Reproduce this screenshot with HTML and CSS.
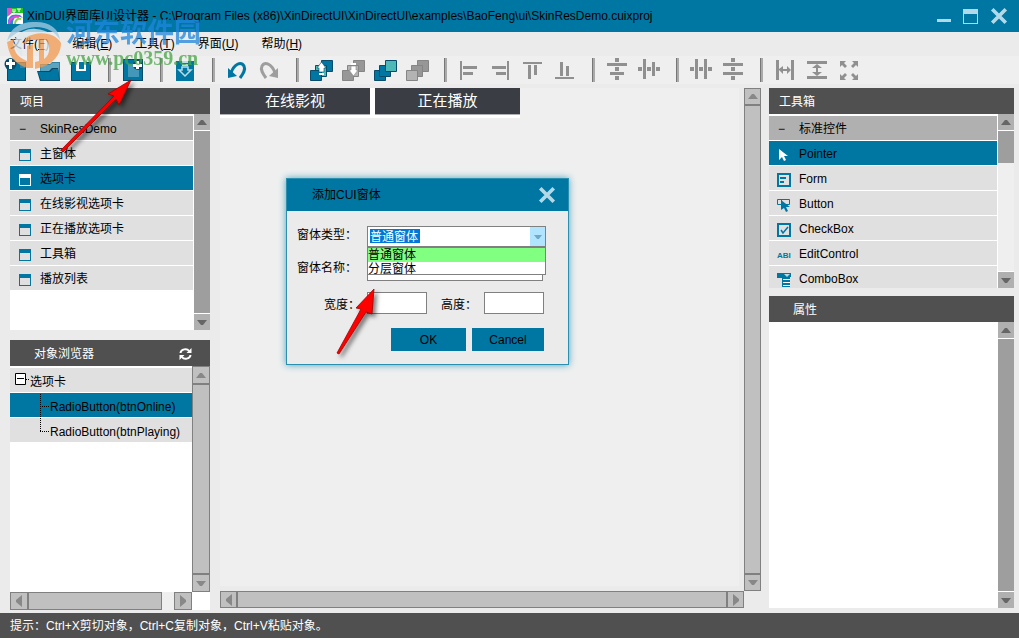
FILE: index.html
```html
<!DOCTYPE html>
<html lang="zh-CN">
<head>
<meta charset="utf-8">
<title>XinDUI界面库UI设计器</title>
<link rel="stylesheet" href="styles.css">
</head>
<body>
<svg class="defs" aria-hidden="true">
  <symbol id="up" viewBox="0 0 10 5"><path d="M0 5 4 0H6L10 5Z" fill="currentColor"/></symbol>
  <symbol id="down" viewBox="0 0 10 5"><path d="M0 0H10L6 5H4Z" fill="currentColor"/></symbol>
  <symbol id="left" viewBox="0 0 6 12"><path d="M6 0V12L0 7V5Z" fill="currentColor"/></symbol>
  <symbol id="right" viewBox="0 0 6 12"><path d="M0 0V12L6 7V5Z" fill="currentColor"/></symbol>
  <symbol id="win" viewBox="0 0 12 12"><path d="M0 0H12V12H0ZM1 4V11H11V4Z" fill="currentColor" fill-rule="evenodd"/></symbol>
  <symbol id="close" viewBox="0 0 16 16"><path d="M2 2 14 14M14 2 2 14" stroke="#b3d9e8" stroke-width="3.2"/></symbol>
</svg>

<header class="titlebar">
  <svg class="app-icon" width="16" height="16" viewBox="0 0 16 16"><path d="M0 0H16V16H0Z" fill="#fff"/><path d="M0 0H5V5L0 9Z" fill="#e04fc4"/><path d="M5 0H16V5H5Z" fill="#22c322"/><path d="M6 1V4H8V1M10 1H14M12 1V4" stroke="#fff" fill="none"/><path d="M1 16C0 8 6 5 13 7L16 10C9 7 6 10 6 16Z" fill="#3c7de0"/><path d="M2 16C2 10 7 8 12 9" stroke="#e84bd0" stroke-width="2" fill="none"/><path d="M8 16C8 12 11 10 14 11" stroke="#8ad044" stroke-width="2" fill="none"/></svg>
  <h1 class="app-title">XinDUI界面库UI设计器 - C:\Program Files (x86)\XinDirectUI\XinDirectUI\examples\BaoFeng\ui\SkinResDemo.cuixproj</h1>
  <button class="plain" aria-label="最小化"><svg width="14" height="16" viewBox="0 0 14 16"><path d="M0 11H14V14H0Z" fill="#b3d9e8"/></svg></button>
  <button class="plain" aria-label="最大化"><svg width="15" height="16" viewBox="0 0 15 16"><path d="M0 1H15V16H0ZM1 6V15H14V6Z" fill="#b3d9e8" fill-rule="evenodd"/></svg></button>
  <button class="plain" aria-label="关闭"><svg width="18" height="18"><use href="#close"/></svg></button>
</header>

<nav class="menubar">
  <button>文件(<u>F</u>)</button><button>编辑(<u>E</u>)</button><button>工具(<u>T</u>)</button><button>界面(<u>U</u>)</button><button>帮助(<u>H</u>)</button>
</nav>

<div class="toolbar" role="toolbar" aria-label="工具栏">
  <button aria-label="新建"><svg viewBox="0 0 32 28"><path d="M7 6H26V25H7Z" fill="#0a4b69"/><path d="M8 7H20L25 12V24H8Z" fill="#0077a3"/><path d="M20 7V12H25V7Z" fill="#2b86a9"/><circle cx="10.500" cy="8" r="6" fill="#0a4b69"/><path d="M9 3H12V6H15V9H12V13H9V9H6V6H9Z" fill="#fff"/></svg></button>
  <button aria-label="打开"><svg viewBox="0 0 32 28"><path d="M8 8H18L20 6H28V25H8Z" fill="#2f84a3"/><path d="M9 9H18L20 7H27V24H8Z" fill="#5fa4be"/><path d="M5 15H17L20 12H26L28 25H8Z" fill="#0a4b69"/><path d="M6 16H18L21 13H26L27 24H9Z" fill="#0077a3"/></svg></button>
  <button aria-label="保存"><svg viewBox="0 0 32 28"><path d="M7 6H27V25H7Z" fill="#0a4b69"/><path d="M8 7H26V24H8Z" fill="#0077a3"/><path d="M12 5H22V15H12Z" fill="#fff"/><path d="M15 6H20V13H15Z" fill="#0077a3"/></svg></button>
  <span class="sep"></span>
  <button aria-label="添加窗体"><svg viewBox="0 0 32 28"><path d="M7 3H27V25H7Z" fill="#0a4b69"/><path d="M8 4H26V24H8Z" fill="#0077a3"/><path d="M12 8H23V21H12Z" fill="#4397b8"/><circle cx="22" cy="9" r="5" fill="#0a4b69"/><path d="M20 5H23V8H26V11H23V13H20V11H17V8H20Z" fill="#fff"/></svg></button>
  <span class="sep"></span>
  <button aria-label="导入"><svg viewBox="0 0 32 28"><path d="M8 5H26V25H8Z" fill="#0077a3"/><path d="M14 6H20M14 9H20" stroke="#b7dce8" stroke-width="2"/><path d="M14 11H20V14H23L17 20 11 14H14Z" fill="none" stroke="#b7dce8" stroke-width="1.500"/></svg></button>
  <span class="sep"></span>
  <button aria-label="撤销"><svg viewBox="0 0 32 28"><path d="M11 17C14 8 21 5 24 10 26 14 23 18 20 22" fill="none" stroke="#0077a3" stroke-width="3"/><path d="M8 12 8 22 17 20Z" fill="#0077a3"/></svg></button>
  <button aria-label="重做"><svg viewBox="0 0 32 28"><path d="M23 17C20 8 13 5 10 10 8 14 11 18 14 22" fill="none" stroke="#9e9e9e" stroke-width="3"/><path d="M26 12 26 22 17 20Z" fill="#9e9e9e"/></svg></button>
  <span class="sep"></span>
  <button aria-label="上移一层"><svg viewBox="0 0 32 28"><g fill="#0077a3" stroke="#0a4b69"><path d="M17.500 4.500H28.500V15.500H17.500Z"/><path d="M11.500 9.500H22.500V20.500H11.500Z" fill="#4cb8b8"/><path d="M6.500 14.500H17.500V24.500H6.500Z"/></g><path d="M17.500 6 22 12H20V16H15V12H13Z" fill="#fff" stroke="#0a4b69" stroke-width=".6"/><path d="M15 18H20" stroke="#fff" stroke-width="2"/></svg></button>
  <button aria-label="下移一层"><svg viewBox="0 0 32 28"><g fill="#979797" stroke="#858585"><path d="M17.500 4.500H28.500V15.500H17.500Z"/><path d="M11.500 9.500H22.500V20.500H11.500Z" fill="#b3b3b3"/><path d="M6.500 14.500H17.500V24.500H6.500Z"/></g><path d="M17.500 20 22 14H20V10H15V14H13Z" fill="#fff" stroke="#888" stroke-width=".6"/><path d="M15 8H20" stroke="#fff" stroke-width="2"/></svg></button>
  <button aria-label="置于顶层"><svg viewBox="0 0 32 28"><g fill="#0077a3" stroke="#0a4b69"><path d="M6.500 14.500H17.500V24.500H6.500Z"/><path d="M11.500 9.500H22.500V20.500H11.500Z"/><path d="M17.500 4.500H28.500V15.500H17.500Z" fill="#4cb8b8"/></g></svg></button>
  <button aria-label="置于底层"><svg viewBox="0 0 32 28"><g fill="#979797" stroke="#858585"><path d="M17.500 4.500H28.500V15.500H17.500Z"/><path d="M11.500 9.500H22.500V20.500H11.500Z"/><path d="M6.500 14.500H17.500V24.500H6.500Z" fill="#b3b3b3"/></g></svg></button>
  <span class="sep"></span>
  <button aria-label="左对齐"><svg viewBox="0 0 32 28"><path d="M8 5H10V24H8ZM11 10H25V13H11ZM11 16H21V19H11Z"/></svg></button>
  <button aria-label="右对齐"><svg viewBox="0 0 32 28"><path d="M23 5H25V24H23ZM8 10H22V13H8ZM12 16H22V19H12Z"/></svg></button>
  <button aria-label="顶端对齐"><svg viewBox="0 0 32 28"><path d="M7 6H26V8H7ZM12 9H15V23H12ZM18 9H21V19H18Z"/></svg></button>
  <button aria-label="底端对齐"><svg viewBox="0 0 32 28"><path d="M7 21H26V23H7ZM12 6H15V20H12ZM18 10H21V20H18Z"/></svg></button>
  <span class="sep"></span>
  <button aria-label="水平居中"><svg viewBox="0 0 32 28"><path d="M7 7H27V10H7ZM10 16H24V19H10ZM15 2H19V6H15ZM15 11H19V15H15ZM15 20H19V24H15Z"/></svg></button>
  <button aria-label="垂直居中"><svg viewBox="0 0 32 28"><path d="M11 3H14V23H11ZM20 6H23V20H20ZM6 11H10V15H6ZM15 11H19V15H15ZM24 11H28V15H24Z"/></svg></button>
  <span class="sep"></span>
  <button aria-label="水平等距"><svg viewBox="0 0 32 28"><path d="M11 3H14V23H11ZM20 3H23V23H20ZM6 11H10V15H6ZM15 11H19V15H15ZM24 11H28V15H24Z"/></svg></button>
  <button aria-label="垂直等距"><svg viewBox="0 0 32 28"><path d="M7 7H27V10H7ZM7 16H27V19H7ZM15 2H19V6H15ZM15 11H19V15H15ZM15 20H19V24H15Z"/></svg></button>
  <span class="sep"></span>
  <button aria-label="等宽"><svg viewBox="0 0 32 28"><path d="M8 4H11V24H8ZM23 4H26V24H23ZM11 13 15 10V13H19V10L23 14 19 18V15H15V18L11 14Z"/></svg></button>
  <button aria-label="等高"><svg viewBox="0 0 32 28"><path d="M7 5H27V8H7ZM7 20H27V23H7ZM17 8 22 12H18V16H22L17 20 12 16H16V12H12Z"/></svg></button>
  <button aria-label="等大小"><svg viewBox="0 0 32 28"><path d="M8 5H14L12 7 15 10 13 12 10 9 8 11ZM26 5H20L22 7 19 10 21 12 24 9 26 11ZM8 24H14L12 22 15 19 13 17 10 20 8 18ZM26 24H20L22 22 19 19 21 17 24 20 26 18Z"/></svg></button>
</div>

<main class="workspace">
  <aside class="side left-side">
    <section class="panel project">
      <h2>项目</h2>
      <div class="panel-body">
        <ul class="rows">
          <li class="group"><span class="mark">−</span>SkinResDemo</li>
          <li><svg class="ico"><use href="#win"/></svg>主窗体</li>
          <li class="active"><svg class="ico"><use href="#win"/></svg>选项卡</li>
          <li><svg class="ico"><use href="#win"/></svg>在线影视选项卡</li>
          <li><svg class="ico"><use href="#win"/></svg>正在播放选项卡</li>
          <li><svg class="ico"><use href="#win"/></svg>工具箱</li>
          <li><svg class="ico"><use href="#win"/></svg>播放列表</li>
        </ul>
        <div class="bar"><button aria-label="向上"><svg><use href="#up"/></svg></button><span class="thumb"></span><button aria-label="向下"><svg><use href="#down"/></svg></button></div>
      </div>
    </section>
    <section class="panel browser">
      <h2 class="indent">对象浏览器<button class="plain refresh" aria-label="刷新"><svg width="13" height="12" viewBox="0 0 13 12"><path d="M1.500 5C2 1 8 0 10 3M11.500 7C11 11 5 12 3 9" fill="none" stroke="#fff" stroke-width="2"/><path d="M12.500 0V5H7.500ZM.5 12V7H5.500Z" fill="#fff"/></svg></button></h2>
      <div class="browser-grid">
        <ul class="rows tree">
          <li><svg class="branch root" viewBox="0 0 20 24"><path d="M5.500 5.500H15.500V16.500H5.500Z" fill="#fff" stroke="#000"/><path d="M7 10.500H14" stroke="#000"/><path d="M16 11.500H20" stroke="#000" stroke-dasharray="1 1"/></svg>选项卡</li>
          <li class="active"><svg class="branch" viewBox="0 0 40 25"><path d="M30.500 1V25M30 13.500H40" stroke="#000" stroke-dasharray="1 1"/></svg>RadioButton(btnOnline)</li>
          <li><svg class="branch" viewBox="0 0 40 25"><path d="M30.500 0V14M30 13.500H40" stroke="#000" stroke-dasharray="1 1"/></svg>RadioButton(btnPlaying)</li>
        </ul>
        <div class="bar boxed"><button aria-label="向上"><svg><use href="#up"/></svg></button><span class="thumb"></span><button aria-label="向下"><svg><use href="#down"/></svg></button></div>
        <div class="bar boxed across"><button aria-label="向左"><svg><use href="#left"/></svg></button><span class="thumb"></span><span class="track"></span><button aria-label="向右"><svg><use href="#right"/></svg></button></div>
      </div>
    </section>
  </aside>

  <section class="editor">
    <div class="canvas">
      <div class="tabs"><button>在线影视</button><button>正在播放</button></div>
    </div>
    <div class="bar boxed slim"><button aria-label="向上"><svg><use href="#up"/></svg></button><span class="thumb"></span><button aria-label="向下"><svg><use href="#down"/></svg></button></div>
    <div class="bar boxed slim across"><button aria-label="向左"><svg><use href="#left"/></svg></button><span class="thumb"></span><button aria-label="向右"><svg><use href="#right"/></svg></button></div>
  </section>

  <aside class="side right-side">
    <section class="panel toolbox">
      <h2>工具箱</h2>
      <div class="panel-body">
        <ul class="rows">
          <li class="group"><span class="mark">−</span>标准控件</li>
          <li class="active"><svg class="ico" viewBox="0 0 14 14"><path d="M2 1V12L5 9 7 13 9 12 7 8H11Z" fill="#fff"/></svg>Pointer</li>
          <li><svg class="ico" viewBox="0 0 14 14"><path d="M1 1H13V13H1Z" fill="none" stroke="#0077a3" stroke-width="2"/><path d="M3 5H9M3 9H7" stroke="#0077a3" stroke-width="2"/></svg>Form</li>
          <li><svg class="ico" viewBox="0 0 14 14"><path d="M.5 1.500H12.500V6.500H.5ZM4.500 2V6" fill="none" stroke="#0077a3"/><path d="M4 2V12L7 10 9 14 11 13 9 9H13Z" fill="#0077a3"/></svg>Button</li>
          <li><svg class="ico" viewBox="0 0 14 14"><path d="M1 1H13V13H1Z" fill="none" stroke="#0077a3" stroke-width="2"/><path d="M4 7 6 10 11 4" fill="none" stroke="#0077a3" stroke-width="1.500"/></svg>CheckBox</li>
          <li><span class="ico abi">ABI</span>EditControl</li>
          <li><svg class="ico" viewBox="0 0 14 14"><path d="M0 0H14V4H13V14H5V5H0Z" fill="#0077a3"/><path d="M7 1H13L10 4Z" fill="#b7dce8"/><path d="M6 6.500H13M6 9.500H13M6 12.500H13" stroke="#fff"/></svg>ComboBox</li>
        </ul>
        <div class="bar"><button aria-label="向上"><svg><use href="#up"/></svg></button><span class="thumb short"></span><span class="track"></span><button aria-label="向下"><svg><use href="#down"/></svg></button></div>
      </div>
    </section>
    <section class="panel props">
      <h2 class="indent">属性</h2>
      <div class="panel-body">
        <div class="rows"></div>
        <div class="bar"><button aria-label="向上"><svg><use href="#up"/></svg></button><span class="thumb"></span><button aria-label="向下"><svg><use href="#down"/></svg></button></div>
      </div>
    </section>
  </aside>
</main>

<footer class="status">提示：Ctrl+X剪切对象，Ctrl+C复制对象，Ctrl+V粘贴对象。</footer>

<div class="dialog" role="dialog" aria-labelledby="dlg-title">
  <div class="dlg-head"><h2 id="dlg-title">添加CUI窗体</h2><button class="plain" aria-label="关闭"><svg width="18" height="18"><use href="#close"/></svg></button></div>
  <form class="dlg-form">
    <div class="field">
      <label for="kind">窗体类型：</label>
      <div class="combo">
        <select id="kind"><option>普通窗体</option><option>分层窗体</option></select>
        <span class="combo-arrow"><svg width="8" height="4"><use href="#down"/></svg></span>
        <ul class="options"><li class="hit">普通窗体</li><li>分层窗体</li></ul>
      </div>
    </div>
    <div class="field"><label for="name">窗体名称：</label><input id="name" type="text"></div>
    <div class="field size"><label for="w">宽度：</label><input id="w" type="text"><label for="h">高度：</label><input id="h" type="text"></div>
    <div class="actions"><button type="button">OK</button><button type="button">Cancel</button></div>
  </form>
</div>

<div class="watermark" aria-hidden="true">
  <svg width="58" height="56" viewBox="0 0 58 56"><path d="M2 26C5 12 17 6 31 7 45 7 54 14 55 25 50 17 42 12 31 12 20 13 10 17 2 26Z" fill="#a5cce4"/><path d="M11 22C16 16 24 13 31 14 42 15 50 20 52 29L44 22 26 19 17 26V42L9 32Z" fill="#dce9f0"/><path d="M2 27C4 42 10 49 22 53H28V29L22 31V46C12 42 7 35 9 24Z" fill="#f29a50"/><path d="M22 22C34 15 51 18 56 28 56 42 45 51 30 54V47L34 46V25L26 25 18 29Z" fill="#f29a50"/><path d="M39 24C46 27 46 40 39 44Z" fill="#ececec"/></svg>
  <div class="wm-text"><b class="wm-name">河东软件园</b><b class="wm-site">www.pc0359.cn</b></div>
</div>
<svg class="arrow one" viewBox="0 0 80 80" aria-hidden="true"><path d="M4 72 57 18 51 16 74 2 62 27 59 21 6 74Z" fill="#f00" stroke="#a00000" stroke-width=".8"/></svg>
<svg class="arrow two" viewBox="0 0 50 72" aria-hidden="true"><path d="M5 66 29 22 24 21 42 2 40 27 34 25 7 67Z" fill="#f00" stroke="#a00000" stroke-width=".8"/></svg>
</body>
</html>
```
FILE: styles.css
```css
* { box-sizing: border-box; }
body {
  margin: 0;
  height: 100vh;
  display: flex;
  flex-direction: column;
  position: relative;
  overflow: hidden;
  background: #ebebeb;
  color: #000;
  font: 12px/16px "Liberation Sans", "Noto Sans CJK SC", sans-serif;
}
h1, h2, ul { margin: 0; padding: 0; font: inherit; list-style: none; }
button, input, select { font: inherit; color: inherit; border: 0; padding: 0; margin: 0; border-radius: 0; }
svg { display: block; flex: none; }
.defs { position: absolute; width: 0; height: 0; }
.plain { background: none; }

.titlebar {
  flex: none;
  height: 32px;
  display: flex;
  align-items: center;
  gap: 12px;
  padding: 0 11px 0 7px;
  background: #0077a3;
}
.app-icon { margin-right: -8px; }
.app-title { flex: 1; white-space: nowrap; }

.menubar { flex: none; height: 24px; display: flex; gap: 23px; padding-left: 10px; align-items: center; }
.menubar button { background: none; }

.toolbar { flex: none; height: 28px; display: flex; background: #efefef; }
.toolbar button { flex: none; width: 32px; background: none; }
.toolbar svg { width: 32px; height: 28px; fill: #909090; }
.sep { flex: none; width: 20px; padding: 2px 6px 2px 12px; }
.sep::before { content: ""; display: block; width: 2px; height: 24px; background: #aaa; border-left: 1px solid #777; }

.workspace { flex: 1; min-height: 0; display: flex; padding: 4px 5px 3px 10px; }
.side { display: flex; flex-direction: column; flex: none; }
.left-side { width: 200px; gap: 10px; margin-right: 10px; }
.right-side { width: 245px; gap: 8px; margin-left: 8px; padding-bottom: 2px; }
.panel { display: flex; flex-direction: column; }
.panel h2 {
  height: 26px;
  flex: none;
  display: flex;
  align-items: center;
  padding: 2px 0 0 10px;
  background: #505050;
  color: #fff;
}
.panel h2.indent { padding-left: 24px; }
.project { height: 242px; }
.toolbox { height: 200px; }
.browser, .props { flex: 1; min-height: 0; }
.refresh { margin-left: auto; margin-right: 18px; }
.panel-body { flex: 1; min-height: 0; display: flex; gap: 1px; background: #fff; }
.rows { flex: 1; min-width: 0; padding-top: 2px; display: flex; flex-direction: column; gap: 1px; background: #fff; overflow: hidden; }
.rows li { flex: none; height: 24px; padding-top: 2px; display: flex; align-items: center; background: #e0e0e0; white-space: nowrap; }
.rows .group { background: #b0b0b0; }
.rows .active { background: #0077a3; }
.mark { width: 30px; padding-left: 9px; }
.ico { width: 12px; height: 12px; margin: 2px 9px 0; color: #0077a3; }
.active .ico { color: #fff; }
.toolbox .ico { width: 14px; height: 14px; margin: 2px 8px 0; }
.toolbox .abi { font: bold 8px/16px "Liberation Sans", sans-serif; }

.bar { width: 16px; flex: none; display: flex; flex-direction: column; gap: 1px; background: #fff; }
.bar button { width: 16px; height: 16px; flex: none; display: flex; align-items: center; justify-content: center; background: #b0b0b0; color: #666; }
.bar svg { width: 10px; height: 5px; }
.thumb { flex: 1; background: #9e9e9e; }
.thumb.short { flex: none; height: 32px; }
.track { flex: 1; background: #efefef; margin-top: -1px; }
.boxed { width: 18px; gap: 0; }
.boxed button { width: 18px; height: 18px; background: #c0c0c0; border: 1px solid #808080; color: #888; }
.boxed .thumb { background: #c0c0c0; border: 1px solid #808080; }
.slim { width: 17px; }
.slim button { width: 17px; height: 17px; }
.across { width: auto; flex-direction: row; }
.across svg { width: 6px; height: 12px; }
.across .track { flex: none; width: 12px; margin: 0; }

.browser-grid { flex: 1; min-height: 0; display: grid; grid-template-columns: 1fr 18px; grid-template-rows: 1fr 18px; background: #fff; }
.tree li { padding-top: 3px; }
.branch { width: 40px; height: 25px; margin-top: -3px; }
.branch.root { width: 20px; height: 24px; margin-top: -4px; }

.editor { flex: 1; min-width: 0; display: grid; grid-template-columns: 1fr 17px; grid-template-rows: 1fr 17px; padding-bottom: 2px; }
.canvas { margin: 0 5px 5px 0; background: #efefef; }
.tabs { width: 300px; display: flex; gap: 5px; padding-bottom: 3px; background: #fff; }
.tabs button { height: 27px; width: 150px; background: #3b3d45; border-bottom: 1px solid #b0b0b4; color: #fff; font-size: 15px; line-height: 24px; }
.tabs button + button { width: 145px; }

.status { flex: none; height: 25px; padding-left: 10px; display: flex; align-items: center; background: #505050; color: #fff; }

.dialog {
  position: absolute;
  left: 286px;
  top: 178px;
  width: 283px;
  background: #ebebeb;
  border: 1px solid #2b8fb0;
  box-shadow: 0 0 7px #4ba3c0;
}
.dlg-head { height: 32px; display: flex; align-items: center; justify-content: space-between; padding: 0 12px 0 25px; background: #0077a3; }
.dlg-form { padding: 15px 22px 13px 10px; display: flex; flex-direction: column; gap: 11px; }
.field { display: flex; align-items: center; height: 22px; }
.field label { width: 70px; padding-bottom: 4px; white-space: nowrap; }
.field input { flex: 1; min-width: 0; height: 22px; border: 1px solid #808080; background: #fff; margin-right: 3px; }
.combo { flex: 1; position: relative; height: 22px; }
.combo select {
  appearance: none;
  display: block;
  width: 100%;
  height: 21px;
  padding-left: 2px;
  border: 1px solid #808080;
  color: #fff;
  background: linear-gradient(#0078d7, #0078d7) 2px 2px / 50px 14px no-repeat #fff;
}
.combo-arrow { position: absolute; right: 1px; top: 1px; width: 15px; height: 19px; display: grid; place-items: center; background: #b0e4ff; color: #6fa9c4; pointer-events: none; }
.options { position: absolute; left: 0; right: 0; top: 21px; height: 28px; overflow: hidden; background: #fff; border: 1px solid #808080; line-height: 14px; }
.options li { height: 14px; }
.options .hit { background: #80ff80; }
.field.size { padding-left: 27px; }
.size label { width: 43px; padding: 3px 0 0; }
.size input { flex: none; width: 60px; margin-right: 14px; }
.size input:last-child { margin-right: 0; }
.actions { display: flex; justify-content: flex-end; gap: 6px; padding: 3px 2px 0 0; }
.actions button { width: 72px; height: 23px; background: #0077a3; }
.actions button:first-child { width: 75px; }

.watermark { position: absolute; left: 5px; top: 15px; display: flex; gap: 3px; opacity: .75; pointer-events: none; }
.wm-text { display: flex; flex-direction: column; }
.wm-name { font: bold 27px/32px "Noto Sans CJK SC", sans-serif; color: #1f86dc; }
.wm-site { font: bold 20px/22px "Liberation Serif", serif; color: #45a545; }
.arrow { position: absolute; pointer-events: none; filter: drop-shadow(3px 3px 2px rgba(0, 0, 0, .5)); }
.one { left: 57px; top: 78px; width: 80px; height: 80px; }
.two { left: 332px; top: 287px; width: 50px; height: 72px; }
```
